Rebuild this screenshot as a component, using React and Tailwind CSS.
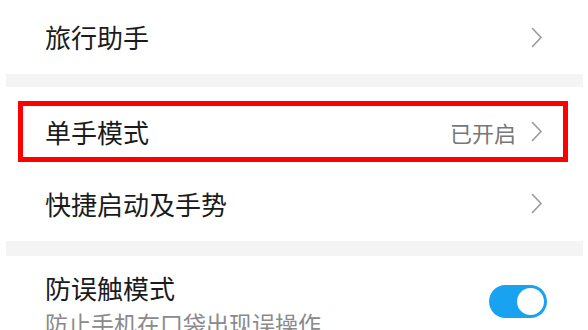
import React from 'react';

const font = { fontFamily: '"Noto Sans CJK SC", "Noto Sans", sans-serif' };

const Chevron = () => (
  <svg width="12" height="21" viewBox="0 0 12 21" className="shrink-0">
    <path d="M1.5 1.5 L10 10.5 L1.5 19.5" fill="none" stroke="#9a9a9a" strokeWidth="1.6" strokeLinecap="round" strokeLinejoin="round" />
  </svg>
);

const Separator = ({ h }) => <div className={`ml-[6px] mr-[5px] bg-[#f4f4f4] ${h}`} />;

export default function App() {
  return (
    <div className="w-[588px] h-[330px] overflow-hidden bg-white text-[#1b1b1b]" style={font}>
      {/* 旅行助手 */}
      <div className="h-[74px] flex items-center justify-between px-[45px]">
        <span className="text-[26px] leading-none">旅行助手</span>
        <Chevron />
      </div>
      <Separator h="h-[13px]" />

      {/* 单手模式, marked by a red frame */}
      <div className="pt-[14px]">
        <div className="ml-[18px] mr-[20px] h-[61px] border-[5px] border-[#ff0000] flex items-center justify-between pl-[22px] pr-[20px]">
          <span className="text-[26px] leading-none">单手模式</span>
          <div className="flex items-center gap-[15px]">
            <span className="text-[22px] leading-none text-[#777777]">已开启</span>
            <Chevron />
          </div>
        </div>
      </div>

      {/* 快捷启动及手势 */}
      <div className="h-[79px] pt-[4px] flex items-center justify-between px-[45px]">
        <span className="text-[26px] leading-none">快捷启动及手势</span>
        <Chevron />
      </div>
      <Separator h="h-[15px]" />

      {/* 防误触模式 */}
      <div className="flex items-start justify-between pl-[45px] pr-[41px] pt-[19px]">
        <div className="flex flex-col gap-[11px]">
          <span className="text-[26px] leading-none">防误触模式</span>
          <span className="text-[23px] leading-none text-[#8a8a8a]">防止手机在口袋出现误操作</span>
        </div>
        <div className="mt-[10px] w-[58px] h-[33px] rounded-full bg-[#19a2f0] flex items-center justify-end pr-[3px]">
          <div className="w-[27px] h-[27px] rounded-full bg-white" />
        </div>
      </div>
    </div>
  );
}
